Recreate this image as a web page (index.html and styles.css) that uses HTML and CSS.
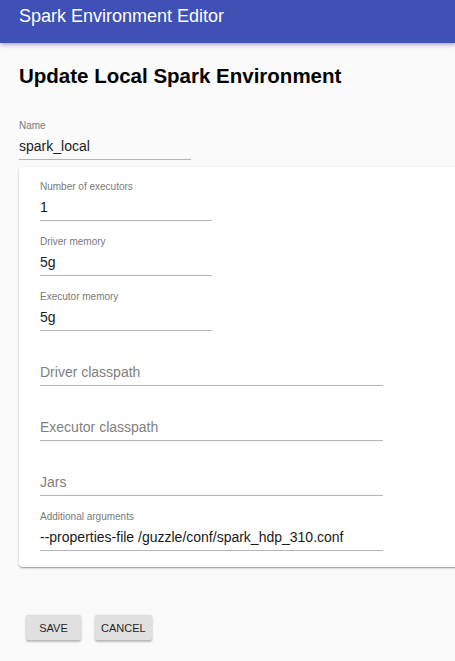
FILE: index.html
```html
<!DOCTYPE html>
<html lang="en">
<head>
<meta charset="utf-8">
<title>Spark Environment Editor</title>
<link rel="stylesheet" href="styles.css">
</head>
<body>
<header class="appbar"><span class="appbar-title">Spark Environment Editor</span></header>
<main class="page">
  <h1 class="page-title">Update Local Spark Environment</h1>
  <div class="field field-short">
    <label class="field-label">Name</label>
    <input class="field-input" value="spark_local">
  </div>
  <section class="card">
    <div class="field field-short">
      <label class="field-label">Number of executors</label>
      <input class="field-input" value="1">
    </div>
    <div class="field field-short">
      <label class="field-label">Driver memory</label>
      <input class="field-input" value="5g">
    </div>
    <div class="field field-short">
      <label class="field-label">Executor memory</label>
      <input class="field-input" value="5g">
    </div>
    <div class="field field-wide field-empty">
      <input class="field-input" placeholder="Driver classpath">
    </div>
    <div class="field field-wide field-empty">
      <input class="field-input" placeholder="Executor classpath">
    </div>
    <div class="field field-wide field-empty">
      <input class="field-input" placeholder="Jars">
    </div>
    <div class="field field-wide">
      <label class="field-label">Additional arguments</label>
      <input class="field-input" value="--properties-file /guzzle/conf/spark_hdp_310.conf">
    </div>
  </section>
  <div class="actions">
    <button class="btn">SAVE</button>
    <button class="btn">CANCEL</button>
  </div>
</main>
</body>
</html>
```
FILE: styles.css
```css
html, body {
  margin: 0;
  padding: 0;
  background: #fafafa;
  font-family: "Liberation Sans", Arial, sans-serif;
  color: #212121;
  overflow: hidden;
}

.appbar {
  height: 43px;
  box-sizing: border-box;
  padding: 6px 19px 0;
  background: #3f51b5;
  color: #fff;
  box-shadow: 0 2px 4px rgba(0, 0, 0, 0.3);
  position: relative;
  z-index: 1;
}

.appbar-title {
  display: block;
  font-size: 18px;
  line-height: 20px;
}

.page {
  padding: 0 0 40px 19px;
  overflow: hidden;
}

.page-title {
  margin: 21px 0 32px;
  font-size: 20.5px;
  line-height: 24px;
  font-weight: bold;
  color: #000;
}

.field {
  display: flex;
  flex-direction: column;
}

.field-short { width: 172px; }
.field-wide { width: 343px; }

.field-label {
  display: block;
  height: 12px;
  font-size: 10px;
  line-height: 12px;
  color: #7a7a7a;
  margin-bottom: 4px;
}

.field-empty {
  padding-top: 16px;
}

.field-input {
  display: block;
  width: 100%;
  box-sizing: border-box;
  height: 24px;
  margin: 0;
  padding: 0 0 3px 0;
  border: none;
  border-bottom: 1px solid #b4b4b4;
  background: transparent;
  font-family: "Liberation Sans", Arial, sans-serif;
  font-size: 14px;
  color: #1a1a1a;
  outline: none;
}

.field-input::placeholder {
  color: #808080;
  opacity: 1;
}

.card {
  margin: 7px -30px 0 0;
  padding: 14px 21px 16px;
  background: #fff;
  border-radius: 4px;
  box-shadow: 0 1px 3px rgba(0, 0, 0, 0.2), 0 1px 1px rgba(0, 0, 0, 0.14), 0 2px 1px -1px rgba(0, 0, 0, 0.12);
  display: flex;
  flex-direction: column;
  gap: 15px;
}

.actions {
  display: flex;
  gap: 14px;
  margin: 48px 0 0 7px;
}

.btn {
  min-width: 55px;
  height: 25px;
  padding: 0 6px;
  border: none;
  border-radius: 2px;
  background: #e0e0e0;
  color: #262626;
  font-family: "Liberation Sans", Arial, sans-serif;
  font-size: 11px;
  box-shadow: 0 2px 2px rgba(0, 0, 0, 0.24), 0 0 2px rgba(0, 0, 0, 0.12);
}
```
